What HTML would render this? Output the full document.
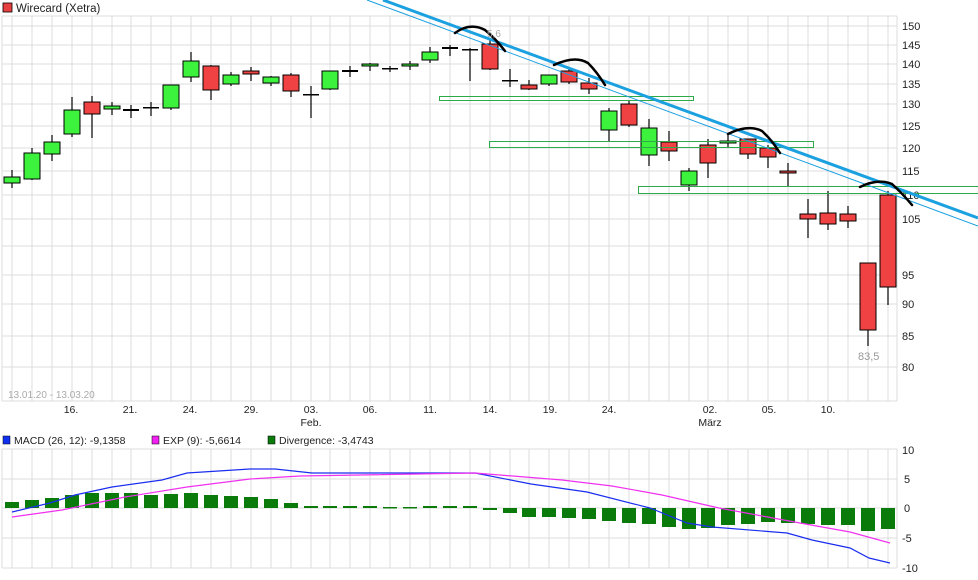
<!DOCTYPE html>
<html><head><meta charset="utf-8"><style>
body{margin:0;background:#fff;width:978px;height:575px;overflow:hidden;font-family:"Liberation Sans",sans-serif}
svg text{font-family:"Liberation Sans",sans-serif}
</style></head><body>
<svg width="978" height="575" viewBox="0 0 978 575" xmlns="http://www.w3.org/2000/svg">
<rect x="3" y="3" width="9" height="9" fill="#e84040" stroke="#000" stroke-width="0.8"/>
<text x="16" y="12" font-size="11.5" fill="#222">Wirecard (Xetra)</text>
<g stroke="#dcdcdc" stroke-width="1">
<line x1="2" y1="16" x2="897" y2="16"/>
<line x1="2" y1="26" x2="897" y2="26"/><line x1="2" y1="45" x2="897" y2="45"/><line x1="2" y1="64" x2="897" y2="64"/><line x1="2" y1="84" x2="897" y2="84"/><line x1="2" y1="104" x2="897" y2="104"/><line x1="2" y1="126" x2="897" y2="126"/><line x1="2" y1="148" x2="897" y2="148"/><line x1="2" y1="171" x2="897" y2="171"/><line x1="2" y1="195" x2="897" y2="195"/><line x1="2" y1="219" x2="897" y2="219"/><line x1="2" y1="246" x2="897" y2="246"/><line x1="2" y1="275" x2="897" y2="275"/><line x1="2" y1="304" x2="897" y2="304"/><line x1="2" y1="336" x2="897" y2="336"/><line x1="2" y1="367" x2="897" y2="367"/><line x1="2" y1="401" x2="897" y2="401"/>
<line x1="2" y1="16" x2="2" y2="401"/><line x1="897" y1="16" x2="897" y2="401"/>
<line x1="12" y1="16" x2="12" y2="401"/><line x1="32" y1="16" x2="32" y2="401"/><line x1="52" y1="16" x2="52" y2="401"/><line x1="72" y1="16" x2="72" y2="401"/><line x1="92" y1="16" x2="92" y2="401"/><line x1="112" y1="16" x2="112" y2="401"/><line x1="131" y1="16" x2="131" y2="401"/><line x1="151" y1="16" x2="151" y2="401"/><line x1="171" y1="16" x2="171" y2="401"/><line x1="191" y1="16" x2="191" y2="401"/><line x1="211" y1="16" x2="211" y2="401"/><line x1="231" y1="16" x2="231" y2="401"/><line x1="251" y1="16" x2="251" y2="401"/><line x1="271" y1="16" x2="271" y2="401"/><line x1="291" y1="16" x2="291" y2="401"/><line x1="311" y1="16" x2="311" y2="401"/><line x1="330" y1="16" x2="330" y2="401"/><line x1="350" y1="16" x2="350" y2="401"/><line x1="370" y1="16" x2="370" y2="401"/><line x1="390" y1="16" x2="390" y2="401"/><line x1="410" y1="16" x2="410" y2="401"/><line x1="430" y1="16" x2="430" y2="401"/><line x1="450" y1="16" x2="450" y2="401"/><line x1="470" y1="16" x2="470" y2="401"/><line x1="490" y1="16" x2="490" y2="401"/><line x1="510" y1="16" x2="510" y2="401"/><line x1="529" y1="16" x2="529" y2="401"/><line x1="549" y1="16" x2="549" y2="401"/><line x1="569" y1="16" x2="569" y2="401"/><line x1="589" y1="16" x2="589" y2="401"/><line x1="609" y1="16" x2="609" y2="401"/><line x1="629" y1="16" x2="629" y2="401"/><line x1="649" y1="16" x2="649" y2="401"/><line x1="669" y1="16" x2="669" y2="401"/><line x1="689" y1="16" x2="689" y2="401"/><line x1="708" y1="16" x2="708" y2="401"/><line x1="728" y1="16" x2="728" y2="401"/><line x1="748" y1="16" x2="748" y2="401"/><line x1="768" y1="16" x2="768" y2="401"/><line x1="788" y1="16" x2="788" y2="401"/><line x1="808" y1="16" x2="808" y2="401"/><line x1="828" y1="16" x2="828" y2="401"/><line x1="848" y1="16" x2="848" y2="401"/><line x1="868" y1="16" x2="868" y2="401"/><line x1="888" y1="16" x2="888" y2="401"/>
</g>
<g font-size="11" fill="#222">
<text x="902" y="30">150</text><text x="902" y="49">145</text><text x="902" y="68">140</text><text x="902" y="88">135</text><text x="902" y="108">130</text><text x="902" y="130">125</text><text x="902" y="152">120</text><text x="902" y="175">115</text><text x="902" y="199">110</text><text x="902" y="223">105</text><text x="902" y="279">95</text><text x="902" y="308">90</text><text x="902" y="340">85</text><text x="902" y="371">80</text>
</g>
<text x="8" y="398" font-size="10" fill="#aaa">13.01.20 - 13.03.20</text>
<g font-size="10.5" fill="#222" text-anchor="middle">
<text x="71" y="413">16.</text><text x="130" y="413">21.</text><text x="190" y="413">24.</text><text x="251" y="413">29.</text><text x="311" y="413">03.</text><text x="370" y="413">06.</text><text x="430" y="413">11.</text><text x="490" y="413">14.</text><text x="550" y="413">19.</text><text x="609" y="413">24.</text><text x="710" y="413">02.</text><text x="769" y="413">05.</text><text x="828" y="413">10.</text>
<text x="311" y="426">Feb.</text><text x="710" y="426">März</text>
</g>
<!-- candles -->
<g stroke="#000" stroke-width="1.2">
<line x1="12" y1="170" x2="12" y2="188"/><line x1="32" y1="148" x2="32" y2="180"/><line x1="52" y1="135" x2="52" y2="161"/><line x1="72" y1="97" x2="72" y2="137"/><line x1="92" y1="96" x2="92" y2="138"/><line x1="112" y1="102" x2="112" y2="115"/><line x1="131" y1="105" x2="131" y2="118"/><line x1="151" y1="102" x2="151" y2="116"/><line x1="171" y1="85" x2="171" y2="110"/><line x1="191" y1="52" x2="191" y2="82"/><line x1="211" y1="65" x2="211" y2="100"/><line x1="231" y1="72" x2="231" y2="86"/><line x1="251" y1="67" x2="251" y2="81"/><line x1="271" y1="76" x2="271" y2="86"/><line x1="291" y1="73" x2="291" y2="97"/><line x1="311" y1="86" x2="311" y2="118"/><line x1="330" y1="71" x2="330" y2="90"/><line x1="350" y1="66" x2="350" y2="77"/><line x1="370" y1="63" x2="370" y2="71"/><line x1="390" y1="66" x2="390" y2="72"/><line x1="410" y1="61" x2="410" y2="70"/><line x1="430" y1="47" x2="430" y2="63"/><line x1="450" y1="45" x2="450" y2="56"/><line x1="470" y1="48" x2="470" y2="81"/><line x1="490" y1="40" x2="490" y2="70"/><line x1="510" y1="69" x2="510" y2="87"/><line x1="529" y1="80" x2="529" y2="90"/><line x1="549" y1="75" x2="549" y2="86"/><line x1="569" y1="69" x2="569" y2="84"/><line x1="589" y1="78" x2="589" y2="94"/><line x1="609" y1="108" x2="609" y2="142"/><line x1="629" y1="100" x2="629" y2="127"/><line x1="649" y1="119" x2="649" y2="166"/><line x1="669" y1="131" x2="669" y2="161"/><line x1="689" y1="168" x2="689" y2="191"/><line x1="708" y1="139" x2="708" y2="178"/><line x1="728" y1="135" x2="728" y2="147"/><line x1="748" y1="139" x2="748" y2="159"/><line x1="768" y1="145" x2="768" y2="168"/><line x1="788" y1="163" x2="788" y2="187"/><line x1="808" y1="199" x2="808" y2="238"/><line x1="828" y1="191" x2="828" y2="230"/><line x1="848" y1="206" x2="848" y2="228"/><line x1="868" y1="263" x2="868" y2="346"/><line x1="888" y1="191" x2="888" y2="305"/>
</g>
<g stroke="#000" stroke-width="1">
<g fill="#3df23d">
<rect x="4" y="177" width="16" height="6"/><rect x="24" y="153" width="16" height="26"/><rect x="44" y="142" width="16" height="12"/><rect x="64" y="110" width="16" height="24"/><rect x="104" y="106" width="16" height="3"/><rect x="163" y="85" width="16" height="23"/><rect x="183" y="61" width="16" height="16"/><rect x="223" y="75" width="16" height="9"/><rect x="263" y="77" width="16" height="6"/><rect x="322" y="71" width="16" height="18"/><rect x="362" y="64" width="16" height="2"/><rect x="402" y="64" width="16" height="2"/><rect x="422" y="52" width="16" height="8"/><rect x="541" y="75" width="16" height="9"/><rect x="601" y="111" width="16" height="19"/><rect x="641" y="128" width="16" height="27"/><rect x="681" y="171" width="16" height="14"/><rect x="720" y="141" width="16" height="2"/>
</g>
<g fill="#f04242">
<rect x="84" y="102" width="16" height="12"/><rect x="203" y="66" width="16" height="24"/><rect x="243" y="71" width="16" height="3"/><rect x="283" y="75" width="16" height="16"/><rect x="482" y="44" width="16" height="25"/><rect x="521" y="85" width="16" height="4"/><rect x="561" y="71" width="16" height="11"/><rect x="581" y="83" width="16" height="6"/><rect x="621" y="104" width="16" height="21"/><rect x="661" y="142" width="16" height="9"/><rect x="700" y="145" width="16" height="18"/><rect x="740" y="139" width="16" height="15"/><rect x="760" y="148" width="16" height="9"/><rect x="780" y="171" width="16" height="2"/><rect x="800" y="214" width="16" height="5"/><rect x="820" y="213" width="16" height="11"/><rect x="840" y="214" width="16" height="7"/><rect x="860" y="263" width="16" height="67"/><rect x="880" y="195" width="16" height="92"/>
</g>
</g>
<g fill="#000">
<rect x="123" y="109" width="16" height="2"/><rect x="143" y="107" width="16" height="1.5"/><rect x="303" y="94" width="16" height="1.5"/><rect x="342" y="70" width="16" height="2"/><rect x="382" y="68" width="16" height="1.5"/><rect x="442" y="47" width="16" height="2"/><rect x="462" y="49" width="16" height="1.5"/><rect x="502" y="80" width="16" height="1.5"/>
</g>
<!-- boxes -->
<g fill="none" stroke="#2eaa4a" stroke-width="1">
<rect x="439.5" y="96.5" width="254" height="4"/>
<rect x="489.5" y="141.5" width="324" height="6"/>
<rect x="638.5" y="186.5" width="340" height="7"/>
</g>
<!-- trend lines -->
<line x1="383" y1="0" x2="978" y2="218" stroke="#1ba0e0" stroke-width="3"/>
<line x1="367" y1="0" x2="978" y2="226" stroke="#1ba0e0" stroke-width="1"/>
<!-- arcs -->
<g fill="none" stroke="#000" stroke-width="2.5" stroke-linecap="round">
<path d="M455 33 Q470 22 485 30 Q495 38 505 51"/>
<path d="M554 65 Q575 55 588 63 Q597 72 605 85"/>
<path d="M728 134 Q748 124 762 131 Q772 140 780 153"/>
<path d="M860 187 Q878 178 892 184 Q902 193 912 205"/>
</g>
<text x="487" y="37" font-size="10" fill="#aaa">5,6</text>
<text x="858" y="360" font-size="11" fill="#999">83,5</text>
<!-- MACD legend -->
<rect x="3" y="436" width="7" height="8" fill="#1030f0" stroke="#000" stroke-width="0.5"/>
<text x="14" y="444" font-size="10.5" fill="#222">MACD (26, 12): -9,1358</text>
<rect x="152" y="436" width="7" height="8" fill="#f020f0" stroke="#000" stroke-width="0.5"/>
<text x="163" y="444" font-size="10.5" fill="#222">EXP (9): -5,6614</text>
<rect x="268" y="436" width="7" height="8" fill="#0a7a0a" stroke="#000" stroke-width="0.5"/>
<text x="279" y="444" font-size="10.5" fill="#222">Divergence: -3,4743</text>
<g stroke="#dcdcdc" stroke-width="1">
<line x1="2" y1="449" x2="897" y2="449"/><line x1="2" y1="479" x2="897" y2="479"/><line x1="2" y1="508" x2="897" y2="508"/><line x1="2" y1="538" x2="897" y2="538"/><line x1="2" y1="568" x2="897" y2="568"/>
<line x1="2" y1="449" x2="2" y2="568"/><line x1="897" y1="449" x2="897" y2="568"/>
<line x1="12" y1="449" x2="12" y2="568"/><line x1="32" y1="449" x2="32" y2="568"/><line x1="52" y1="449" x2="52" y2="568"/><line x1="72" y1="449" x2="72" y2="568"/><line x1="92" y1="449" x2="92" y2="568"/><line x1="112" y1="449" x2="112" y2="568"/><line x1="131" y1="449" x2="131" y2="568"/><line x1="151" y1="449" x2="151" y2="568"/><line x1="171" y1="449" x2="171" y2="568"/><line x1="191" y1="449" x2="191" y2="568"/><line x1="211" y1="449" x2="211" y2="568"/><line x1="231" y1="449" x2="231" y2="568"/><line x1="251" y1="449" x2="251" y2="568"/><line x1="271" y1="449" x2="271" y2="568"/><line x1="291" y1="449" x2="291" y2="568"/><line x1="311" y1="449" x2="311" y2="568"/><line x1="330" y1="449" x2="330" y2="568"/><line x1="350" y1="449" x2="350" y2="568"/><line x1="370" y1="449" x2="370" y2="568"/><line x1="390" y1="449" x2="390" y2="568"/><line x1="410" y1="449" x2="410" y2="568"/><line x1="430" y1="449" x2="430" y2="568"/><line x1="450" y1="449" x2="450" y2="568"/><line x1="470" y1="449" x2="470" y2="568"/><line x1="490" y1="449" x2="490" y2="568"/><line x1="510" y1="449" x2="510" y2="568"/><line x1="529" y1="449" x2="529" y2="568"/><line x1="549" y1="449" x2="549" y2="568"/><line x1="569" y1="449" x2="569" y2="568"/><line x1="589" y1="449" x2="589" y2="568"/><line x1="609" y1="449" x2="609" y2="568"/><line x1="629" y1="449" x2="629" y2="568"/><line x1="649" y1="449" x2="649" y2="568"/><line x1="669" y1="449" x2="669" y2="568"/><line x1="689" y1="449" x2="689" y2="568"/><line x1="708" y1="449" x2="708" y2="568"/><line x1="728" y1="449" x2="728" y2="568"/><line x1="748" y1="449" x2="748" y2="568"/><line x1="768" y1="449" x2="768" y2="568"/><line x1="788" y1="449" x2="788" y2="568"/><line x1="808" y1="449" x2="808" y2="568"/><line x1="828" y1="449" x2="828" y2="568"/><line x1="848" y1="449" x2="848" y2="568"/><line x1="868" y1="449" x2="868" y2="568"/><line x1="888" y1="449" x2="888" y2="568"/>
</g>
<g font-size="11" fill="#222">
<text x="902" y="454">10</text><text x="904" y="483">5</text><text x="904" y="512">0</text><text x="902" y="542">-5</text><text x="902" y="572">-10</text>
</g>
<g fill="#0a7a0a">
<rect x="5" y="502" width="14" height="6"/><rect x="25" y="500" width="14" height="8"/><rect x="45" y="498" width="14" height="10"/><rect x="65" y="495" width="14" height="13"/><rect x="85" y="493" width="14" height="15"/><rect x="105" y="493" width="14" height="15"/><rect x="124" y="493" width="14" height="15"/><rect x="144" y="495" width="14" height="13"/><rect x="164" y="494" width="14" height="14"/><rect x="184" y="493" width="14" height="15"/><rect x="204" y="495" width="14" height="13"/><rect x="224" y="496" width="14" height="12"/><rect x="244" y="497" width="14" height="11"/><rect x="264" y="499" width="14" height="9"/><rect x="284" y="503" width="14" height="5"/><rect x="304" y="506" width="14" height="2"/><rect x="323" y="506" width="14" height="2"/><rect x="343" y="506" width="14" height="2"/><rect x="363" y="506" width="14" height="2"/><rect x="383" y="507" width="14" height="1.5"/><rect x="403" y="507" width="14" height="1.5"/><rect x="423" y="506" width="14" height="2"/><rect x="443" y="506" width="14" height="2"/><rect x="463" y="506" width="14" height="2"/><rect x="483" y="508" width="14" height="2"/><rect x="503" y="508" width="14" height="5"/><rect x="522" y="508" width="14" height="9"/><rect x="542" y="508" width="14" height="9"/><rect x="562" y="508" width="14" height="10"/><rect x="582" y="508" width="14" height="11"/><rect x="602" y="508" width="14" height="13"/><rect x="622" y="508" width="14" height="15"/><rect x="642" y="508" width="14" height="16"/><rect x="662" y="508" width="14" height="19"/><rect x="682" y="508" width="14" height="21"/><rect x="701" y="508" width="14" height="20"/><rect x="721" y="508" width="14" height="17"/><rect x="741" y="508" width="14" height="16"/><rect x="761" y="508" width="14" height="14"/><rect x="781" y="508" width="14" height="15"/><rect x="801" y="508" width="14" height="16"/><rect x="821" y="508" width="14" height="17"/><rect x="841" y="508" width="14" height="17"/><rect x="861" y="508" width="14" height="23"/><rect x="881" y="508" width="14" height="21"/>
</g>
<polyline fill="none" stroke="#1a2ef0" stroke-width="1.2" points="12,512 50,503 75,495 112,487 162,480 187,473 250,469 275,469 312,473 475,473 531,484 587,492 650,508 687,523 712,527 787,533 812,540 850,548 869,558 890,563"/>
<polyline fill="none" stroke="#f030f0" stroke-width="1.2" points="12,517 62,510 125,497 187,487 250,479 300,476 475,473 562,480 612,486 662,495 719,508 800,523 850,532 890,543"/>
</svg>
</body></html>
